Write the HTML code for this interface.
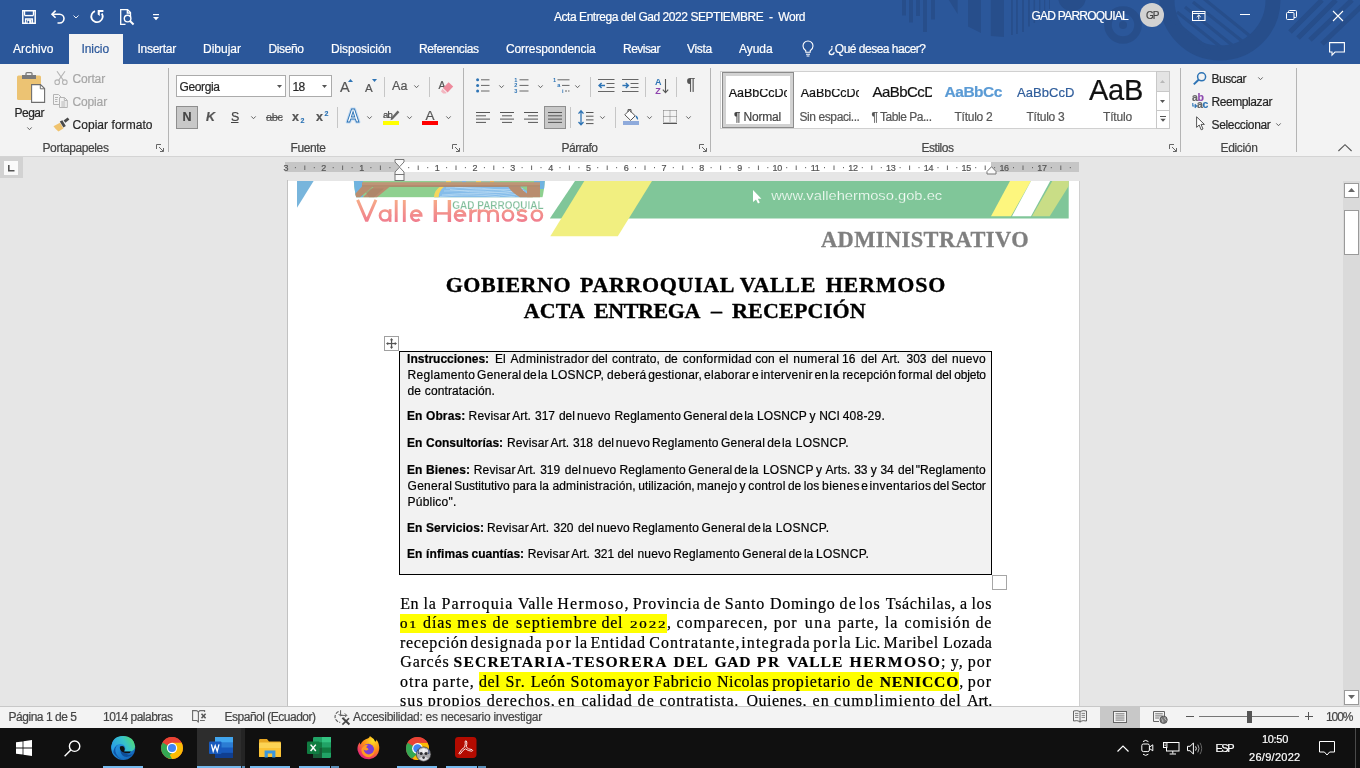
<!DOCTYPE html>
<html><head><meta charset="utf-8"><title>Word</title>
<style>
html,body{margin:0;padding:0;width:1360px;height:768px;overflow:hidden;background:#e6e6e6;}
body{position:relative;font-family:"Liberation Sans",sans-serif;font-size:12px;color:#262626;}
.a{position:absolute;}
.t{position:absolute;white-space:pre;line-height:normal;font-family:"Liberation Sans",sans-serif;-webkit-text-stroke:0.2px currentColor;}
svg{position:absolute;overflow:visible;}
.sf{font-family:"Liberation Serif",serif;}
.vsep{position:absolute;width:1px;background:#c6c6c6;}
.gsep{position:absolute;width:1px;background:#b4b4b4;top:68px;height:84px;}
.w{color:#fff;}
.dis{color:#a6a6a6;}
.hl{background:#ffff00;}
</style></head>
<body>
<div id="root" style="position:absolute;left:0;top:0;width:1360px;height:768px;overflow:hidden;will-change:transform;">
<!-- ===== TITLE BAR + TABS ===== -->
<div class="a" style="left:0;top:0;width:1360px;height:64px;background:#2b579a;"></div>
<!-- decorative background pattern -->
<svg style="left:880px;top:0" width="480" height="64" viewBox="880 0 480 64">
 <g fill="#274e8b">
  <rect x="902" y="0" width="4" height="15.5"/><rect x="909" y="0" width="4" height="22.5"/><rect x="916" y="0" width="4" height="16"/>
  <rect x="923" y="0" width="4" height="32"/><rect x="931" y="0" width="4" height="19.5"/>
  <path d="M948.8 0H957.6V14Z"/>
  <path d="M968 0H981V33L968 26.5Z"/>
  <path d="M990.8 0H1004V37L990.8 36Z"/>
  <rect x="1011" y="0" width="1.8" height="35"/><rect x="1016" y="0" width="1.8" height="34"/><rect x="1022" y="0" width="2" height="32"/>
  <rect x="1028" y="0" width="1.8" height="26.5"/><rect x="1033.5" y="0" width="1.6" height="23"/><rect x="1039" y="0" width="1.4" height="18"/><rect x="1044" y="0" width="1.2" height="13"/><rect x="1049" y="0" width="1" height="9"/>
  <circle cx="1072" cy="-3" r="14"/>
 </g>
 <g fill="none" stroke="#274e8b">
  <circle cx="1123" cy="25" r="15" stroke-width="7.5"/>
  <circle cx="1220" cy="0" r="53" stroke-width="15"/>
 </g>
 <circle cx="1123" cy="25" r="4" fill="#274e8b"/>
 <g stroke="#274e8b" stroke-width="3.2">
  <path d="M1170 18L1210 50M1177 12L1222 48M1185 7L1232 45M1193 2L1242 41M1203 -2L1250 36"/>
  <path d="M1322 0L1290 32M1336 0L1298 38M1352 0L1310 40M1368 0L1322 44" stroke-width="5"/>
 </g>
</svg>
<!-- QAT icons -->
<svg style="left:22px;top:10px" width="14" height="14" viewBox="0 0 14 14" fill="none" stroke="#fff" stroke-width="1.5">
 <path d="M0.8 0.8H13.2V13.2H0.8Z"/><path d="M2.6 5.6H11.4" stroke-width="1.4"/><path d="M2.6 0.8V5.6M11.4 0.8V5.6" stroke-width="1.2"/><path d="M3.6 13V9H10.4V13" stroke-width="1.4"/><rect x="5" y="9.6" width="4.4" height="3.4" fill="#fff" stroke="none"/><rect x="5.6" y="10.8" width="1.6" height="2.4" fill="#2b579a" stroke="none"/>
</svg>
<svg style="left:51px;top:10px" width="15" height="14" viewBox="0 0 15 14" fill="none" stroke="#fff" stroke-width="1.6">
 <path d="M1 4.2H8.6A4.4 4.4 0 0 1 8.6 13H6.5"/><path d="M4.6 0.6L1 4.2L4.6 7.8"/>
</svg>
<svg style="left:72.5px;top:14.5px" width="6" height="4" viewBox="0 0 6 4" fill="none" stroke="#e8eef7" stroke-width="1"><path d="M0.5 0.5L3 3L5.5 0.5"/></svg>
<svg style="left:89.5px;top:10px" width="14" height="14" viewBox="0 0 14 14" fill="none" stroke="#fff" stroke-width="1.8">
 <path d="M5 1.1A5.7 5.7 0 1 0 11.8 3.4"/><path d="M7.7 0H13.4V1.9H9.8V6L7.7 4.4Z" fill="#fff" stroke="none"/>
</svg>
<svg style="left:119.5px;top:9px" width="15" height="16" viewBox="0 0 15 16" fill="none" stroke="#fff" stroke-width="1.3">
 <path d="M10.5 8V3.6L7.6 0.7H0.7V15.3H5.5"/><path d="M7.3 0.7V4H10.5"/>
 <circle cx="7.6" cy="9.6" r="3.3" stroke-width="1.4"/><path d="M10 12L13.6 15.4" stroke-width="2"/>
</svg>
<svg style="left:152.5px;top:14px" width="6" height="7" viewBox="0 0 6 7" fill="#fff"><rect x="0" y="0" width="6" height="1.2"/><path d="M0 3H6L3 6.2Z"/></svg>
<span class="t" style="left:554px;top:10.30px;font-size:12px;letter-spacing:-0.450px;color:#fff;">Acta Entrega del Gad 2022 SEPTIEMBRE  -  Word</span>
<span class="t" style="left:1031.5px;top:9.00px;font-size:12px;letter-spacing:-0.760px;color:#fff;">GAD PARROQUIAL</span>
<div class="a" style="left:1140px;top:3px;width:24px;height:24px;border-radius:12px;background:#d2d2d2;"></div>
<span class="t" style="left:1146px;top:10.00px;font-size:10px;letter-spacing:-0.977px;color:#444;">GP</span>
<!-- window buttons -->
<svg style="left:1192px;top:10.5px" width="14" height="10" viewBox="0 0 14 10" fill="none" stroke="#fff" stroke-width="1">
 <rect x="0.5" y="0.5" width="12.5" height="9"/><path d="M0.5 2.5H13" /><path d="M6.75 8.5V4.2M4.7 6L6.75 4L8.8 6"/>
</svg>
<div class="a" style="left:1240px;top:14px;width:10px;height:1px;background:#fff;"></div>
<svg style="left:1285.5px;top:10px" width="11" height="10" viewBox="0 0 11 10" fill="none" stroke="#fff" stroke-width="1">
 <rect x="0.5" y="2.5" width="7.5" height="7" rx="1"/><path d="M2.5 2.5V1.5Q2.5 0.5 3.5 0.5H9.5Q10.5 0.5 10.5 1.5V6.5Q10.5 7.5 9.5 7.5H8"/>
</svg>
<svg style="left:1332.5px;top:10.5px" width="10" height="10" viewBox="0 0 10 10" fill="none" stroke="#fff" stroke-width="1.1"><path d="M0 0L10 10M10 0L0 10"/></svg>
<!-- tabs -->
<div class="a" style="left:69px;top:34px;width:54px;height:30px;background:#f3f3f3;"></div>
<span class="t" style="left:13px;top:42.00px;font-size:12px;letter-spacing:0.069px;color:#fff;">Archivo</span>
<span class="t" style="left:81.5px;top:42.00px;font-size:12px;letter-spacing:-0.086px;color:#2b579a;">Inicio</span>
<span class="t" style="left:137.5px;top:42.00px;font-size:12px;letter-spacing:-0.273px;color:#fff;">Insertar</span>
<span class="t" style="left:203px;top:42.00px;font-size:12px;letter-spacing:-0.002px;color:#fff;">Dibujar</span>
<span class="t" style="left:268.5px;top:42.00px;font-size:12px;letter-spacing:-0.393px;color:#fff;">Diseño</span>
<span class="t" style="left:331px;top:42.00px;font-size:12px;letter-spacing:-0.124px;color:#fff;">Disposición</span>
<span class="t" style="left:419px;top:42.00px;font-size:12px;letter-spacing:-0.412px;color:#fff;">Referencias</span>
<span class="t" style="left:506px;top:42.00px;font-size:12px;letter-spacing:-0.126px;color:#fff;">Correspondencia</span>
<span class="t" style="left:623px;top:42.00px;font-size:12px;letter-spacing:-0.527px;color:#fff;">Revisar</span>
<span class="t" style="left:687px;top:42.00px;font-size:12px;letter-spacing:-0.294px;color:#fff;">Vista</span>
<span class="t" style="left:739px;top:42.00px;font-size:12px;letter-spacing:-0.062px;color:#fff;">Ayuda</span>
<svg style="left:802px;top:40px" width="12" height="17" viewBox="0 0 12 17" fill="none" stroke="#fff" stroke-width="1.1">
 <path d="M3.8 12.2V10.8C2 9.6 1 8 1 6A5 5 0 0 1 11 6C11 8 10 9.6 8.2 10.8V12.2Z"/><path d="M4 14.2H8M4.6 16H7.4"/>
</svg>
<span class="t" style="left:828px;top:42.00px;font-size:12px;letter-spacing:-0.505px;color:#fff;">¿Qué desea hacer?</span>
<svg style="left:1329px;top:41.5px" width="16" height="14" viewBox="0 0 16 14" fill="none" stroke="#fff" stroke-width="1.1">
 <path d="M0.6 0.6H15.4V10H6L3 13.2V10H0.6Z"/>
</svg>
<!-- ===== RIBBON ===== -->
<div class="a" style="left:0;top:64px;width:1360px;height:92px;background:#f3f3f3;"></div>
<div class="a" style="left:0;top:156px;width:1360px;height:1px;background:#d4d4d4;"></div>
<!-- Clipboard group -->
<svg style="left:17px;top:72px" width="29" height="31" viewBox="0 0 29 31">
 <rect x="0" y="3.5" width="24" height="24.5" rx="1.5" fill="#ecc373"/>
 <rect x="5" y="3" width="14" height="4" fill="#7a7a7a"/><path d="M9 3.2V1.6Q9 0.6 10 0.6H14Q15 0.6 15 1.6V3.2" fill="none" stroke="#7a7a7a" stroke-width="1.3"/>
 <path d="M14.6 12.6H23.5L27.6 16.6V30.4H14.6Z" fill="#fff" stroke="#6e6e6e" stroke-width="1.1"/><path d="M23.3 12.8V16.8H27.4" fill="none" stroke="#6e6e6e" stroke-width="1"/>
</svg>
<span class="t" style="left:14.5px;top:106.00px;font-size:12px;letter-spacing:-0.506px;">Pegar</span>
<svg style="left:27px;top:127px" width="5" height="3.5" viewBox="0 0 5 3.5" fill="none" stroke="#555" stroke-width="0.9"><path d="M0.3 0.4L2.5 2.7L4.7 0.4"/></svg>
<!-- cut -->
<svg style="left:54px;top:71px" width="14" height="14" viewBox="0 0 14 14" fill="none" stroke="#b4b4b4" stroke-width="1.1">
 <path d="M3 0.3L9.6 9.6M11 0.3L4.4 9.6"/><circle cx="3.2" cy="11.2" r="2.3"/><circle cx="10.8" cy="11.2" r="2.3"/>
</svg>
<span class="t" style="left:72.5px;top:72.00px;font-size:12px;letter-spacing:-0.141px;color:#a6a6a6;">Cortar</span>
<!-- copy -->
<svg style="left:53px;top:94px" width="15" height="14" viewBox="0 0 15 14" fill="none" stroke="#b4b4b4" stroke-width="1">
 <path d="M6.5 10.5H0.5V0.5H5.5L8 3"/><path d="M2 3.5H5M2 5.5H4.5M2 7.5H4.5"/>
 <path d="M6.5 3.5H11.5L14.3 6.3V13.5H6.5Z" fill="#f3f3f3"/><path d="M8.3 8H12.3M8.3 10H12.3M8.3 12H12.3M11.3 3.7V6.5H14.2"/>
</svg>
<span class="t" style="left:72.5px;top:95.00px;font-size:12px;letter-spacing:-0.143px;color:#a6a6a6;">Copiar</span>
<!-- format painter -->
<svg style="left:53px;top:116.5px" width="17" height="15" viewBox="0 0 17 15">
 <path d="M0.5 9.2L7 5.8L10.4 11.6L5.4 14.6Q2.8 12.4 0.5 9.2Z" fill="#f0c36e"/>
 <path d="M6.8 4.6L9.4 3.2L12.8 9L10.4 10.4Z" fill="#4a4a4a"/>
 <path d="M10.6 3.4L14.6 0.6L16.4 2.4L12.4 5.8Z" fill="#4a4a4a"/>
</svg>
<span class="t" style="left:72.5px;top:118.00px;font-size:12px;letter-spacing:0.045px;">Copiar formato</span>
<span class="t" style="left:42.5px;top:141.00px;font-size:12px;letter-spacing:-0.393px;color:#444;">Portapapeles</span>
<svg class="lau" style="left:156px;top:144px" width="8" height="8" viewBox="0 0 8 8" fill="none" stroke="#666" stroke-width="1"><path d="M0.5 5V0.5H5"/><path d="M3 3L7.3 7.3M7.5 4V7.5H4"/></svg>
<div class="gsep" style="left:167.5px;"></div>
<!-- Font group -->
<div class="a" style="left:176px;top:75px;width:109.5px;height:21.5px;background:#fff;border:1px solid #ababab;box-sizing:border-box;"></div>
<span class="t" style="left:179.5px;top:80.00px;font-size:12px;letter-spacing:-0.386px;">Georgia</span>
<svg style="left:277px;top:85px" width="5" height="3" viewBox="0 0 5 3" fill="#555"><path d="M0 0H5L2.5 3Z"/></svg>
<div class="a" style="left:289px;top:75px;width:43px;height:21.5px;background:#fff;border:1px solid #ababab;box-sizing:border-box;"></div>
<span class="t" style="left:292.5px;top:80.00px;font-size:12px;letter-spacing:-0.680px;">18</span>
<svg style="left:322px;top:85px" width="5" height="3" viewBox="0 0 5 3" fill="#555"><path d="M0 0H5L2.5 3Z"/></svg>
<!-- grow / shrink -->
<span class="t" style="left:340px;top:79.00px;font-size:14.5px;letter-spacing:0.328px;color:#555;">A</span>
<svg style="left:348px;top:79px" width="5" height="3" viewBox="0 0 5 3" fill="#2e74b5"><path d="M0 3H5L2.5 0Z"/></svg>
<span class="t" style="left:365px;top:82.00px;font-size:11.5px;letter-spacing:0.328px;color:#555;">A</span>
<svg style="left:372px;top:79px" width="5" height="3" viewBox="0 0 5 3" fill="#2e74b5"><path d="M0 0H5L2.5 3Z"/></svg>
<div class="vsep" style="left:384px;top:77px;height:20px;"></div>
<span class="t" style="left:392px;top:79.00px;font-size:12.5px;letter-spacing:0.102px;color:#555;">Aa</span>
<svg class="dd" style="left:413.5px;top:84.5px" width="5" height="3.5" viewBox="0 0 5 3.5" fill="none" stroke="#555" stroke-width="0.9"><path d="M0.3 0.4L2.5 2.7L4.7 0.4"/></svg>
<div class="vsep" style="left:429px;top:77px;height:20px;"></div>
<!-- clear formatting -->
<span class="t" style="left:438.5px;top:79.00px;font-size:10.5px;letter-spacing:-0.016px;color:#555;">A</span>
<svg style="left:440px;top:81px" width="14" height="13" viewBox="0 0 14 13">
 <path d="M8.6 1.2L13.2 5.6L7.6 11.4L3 7Z" fill="#ee8a9c"/><path d="M2.4 7.8L6.8 12L5.6 12.6H3.2L1 10.4Z" fill="#f3b6c0"/>
</svg>
<!-- row 2 -->
<div class="a" style="left:176px;top:106px;width:22px;height:23px;background:#c8c8c8;border:1px solid #8e8e8e;box-sizing:border-box;"></div>
<span class="t" style="left:182.5px;top:110.00px;font-size:12.5px;letter-spacing:-0.031px;font-weight:bold;color:#444;">N</span>
<span class="t" style="left:206px;top:110.00px;font-size:12.5px;letter-spacing:-1.031px;font-weight:bold;font-style:italic;color:#555;">K</span>
<span class="t" style="left:231px;top:110.00px;font-size:12.5px;letter-spacing:-0.844px;color:#444;text-decoration:underline;text-underline-offset:1px;">S</span>
<svg class="dd" style="left:250.5px;top:115.5px" width="5" height="3.5" viewBox="0 0 5 3.5" fill="none" stroke="#555" stroke-width="0.9"><path d="M0.3 0.4L2.5 2.7L4.7 0.4"/></svg>
<span class="t" style="left:266px;top:111.00px;font-size:11px;letter-spacing:-0.417px;color:#555;text-decoration:line-through;">abc</span>
<span class="t" style="left:292px;top:110.00px;font-size:12.5px;letter-spacing:1.047px;font-weight:bold;color:#555;">x</span>
<span class="t" style="left:300.5px;top:117.00px;font-size:7px;letter-spacing:0.094px;color:#2e74b5;font-weight:bold;">2</span>
<span class="t" style="left:316px;top:110.00px;font-size:12.5px;letter-spacing:1.047px;font-weight:bold;color:#555;">x</span>
<span class="t" style="left:324.5px;top:110.00px;font-size:7px;letter-spacing:0.094px;color:#2e74b5;font-weight:bold;">2</span>
<div class="vsep" style="left:337px;top:107px;height:21px;"></div>
<!-- text effects A -->
<svg style="left:345px;top:108px" width="16" height="16" viewBox="0 0 16 16">
 <text x="8" y="14.4" text-anchor="middle" font-family="Liberation Sans" font-weight="bold" font-size="17.5" fill="none" stroke="#c3dbf3" stroke-width="3" stroke-linejoin="round">A</text>
 <text x="8" y="14.4" text-anchor="middle" font-family="Liberation Sans" font-weight="bold" font-size="17.5" fill="#fff" stroke="#2e74b5" stroke-width="0.9">A</text>
</svg>
<svg class="dd" style="left:366.5px;top:115.5px" width="5" height="3.5" viewBox="0 0 5 3.5" fill="none" stroke="#555" stroke-width="0.9"><path d="M0.3 0.4L2.5 2.7L4.7 0.4"/></svg>
<!-- highlight -->
<span class="t" style="left:383px;top:109.00px;font-size:9.5px;letter-spacing:-0.789px;color:#444;">ab</span>
<svg style="left:389px;top:109.5px" width="11" height="11" viewBox="0 0 11 11"><path d="M8.6 0.4L10.4 2.2L3.6 9.4L1.6 10.2L2 8Z" fill="#666"/></svg>
<div class="a" style="left:383px;top:121px;width:16px;height:3.7px;background:#ffff00;"></div>
<svg class="dd" style="left:406.5px;top:115.5px" width="5" height="3.5" viewBox="0 0 5 3.5" fill="none" stroke="#555" stroke-width="0.9"><path d="M0.3 0.4L2.5 2.7L4.7 0.4"/></svg>
<!-- font colour -->
<span class="t" style="left:425.5px;top:108.30px;font-size:13.5px;letter-spacing:-0.016px;color:#555;">A</span>
<div class="a" style="left:422px;top:121px;width:16px;height:3.7px;background:#ff0000;"></div>
<svg class="dd" style="left:445.5px;top:115.5px" width="5" height="3.5" viewBox="0 0 5 3.5" fill="none" stroke="#555" stroke-width="0.9"><path d="M0.3 0.4L2.5 2.7L4.7 0.4"/></svg>
<span class="t" style="left:290.5px;top:141.00px;font-size:12px;letter-spacing:-0.393px;color:#444;">Fuente</span>
<svg class="lau" style="left:452px;top:144px" width="8" height="8" viewBox="0 0 8 8" fill="none" stroke="#666" stroke-width="1"><path d="M0.5 5V0.5H5"/><path d="M3 3L7.3 7.3M7.5 4V7.5H4"/></svg>
<div class="gsep" style="left:463px;"></div>
<!-- Paragraph group row 1 -->
<svg style="left:476px;top:78px" width="14" height="15" viewBox="0 0 14 15">
 <g fill="#2e74b5"><circle cx="1.6" cy="1.8" r="1.5"/><circle cx="1.6" cy="7.4" r="1.5"/><circle cx="1.6" cy="13" r="1.5"/></g>
 <g stroke="#666" stroke-width="1"><path d="M5 1.8H13.5M5 7.4H13.5M5 13H13.5"/></g>
</svg>
<svg class="dd" style="left:498.5px;top:84.5px" width="5" height="3.5" viewBox="0 0 5 3.5" fill="none" stroke="#555" stroke-width="0.9"><path d="M0.3 0.4L2.5 2.7L4.7 0.4"/></svg>
<svg style="left:514px;top:77px" width="15" height="16" viewBox="0 0 15 16">
 <g font-family="Liberation Sans" font-size="5.6" font-weight="bold" fill="#2e74b5"><text x="0.2" y="4.8">1</text><text x="0.2" y="10.4">2</text><text x="0.2" y="16">3</text></g>
 <g stroke="#666" stroke-width="1"><path d="M5.5 2.8H14.5M5.5 8.4H14.5M5.5 14H14.5"/></g>
</svg>
<svg class="dd" style="left:537.5px;top:84.5px" width="5" height="3.5" viewBox="0 0 5 3.5" fill="none" stroke="#555" stroke-width="0.9"><path d="M0.3 0.4L2.5 2.7L4.7 0.4"/></svg>
<svg style="left:552.5px;top:77px" width="17" height="16" viewBox="0 0 17 16">
 <g font-family="Liberation Sans" font-size="5.6" font-weight="bold" fill="#2e74b5"><text x="0" y="4.8">1</text><text x="4.3" y="10.4">a</text><text x="9" y="16">i</text></g>
 <g stroke="#666" stroke-width="1"><path d="M4.5 2.8H16.5M9 8.4H16.5"/><path d="M12 14H16.5" stroke-dasharray="2 1"/></g>
</svg>
<svg class="dd" style="left:574.5px;top:84.5px" width="5" height="3.5" viewBox="0 0 5 3.5" fill="none" stroke="#555" stroke-width="0.9"><path d="M0.3 0.4L2.5 2.7L4.7 0.4"/></svg>
<div class="vsep" style="left:590px;top:77px;height:20px;"></div>
<svg style="left:597.5px;top:79px" width="17" height="14" viewBox="0 0 17 14">
 <g stroke="#666" stroke-width="1"><path d="M0 0.5H16.5M8.5 4.5H16.5M8.5 8.5H16.5M0 12.5H16.5"/></g>
 <path d="M7 6.5H1.2M3.6 3.9L1 6.5L3.6 9.1" fill="none" stroke="#2e74b5" stroke-width="1.4"/>
</svg>
<svg style="left:622px;top:79px" width="17" height="14" viewBox="0 0 17 14">
 <g stroke="#666" stroke-width="1"><path d="M0 0.5H16.5M8.5 4.5H16.5M8.5 8.5H16.5M0 12.5H16.5"/></g>
 <path d="M0.4 6.5H6.2M3.8 3.9L6.4 6.5L3.8 9.1" fill="none" stroke="#2e74b5" stroke-width="1.4"/>
</svg>
<div class="vsep" style="left:645px;top:77px;height:20px;"></div>
<svg style="left:655px;top:77.5px" width="14" height="16" viewBox="0 0 14 16">
 <text x="0" y="7.2" font-family="Liberation Sans" font-size="9" font-weight="bold" fill="#2e74b5">A</text>
 <text x="0.3" y="15.6" font-family="Liberation Sans" font-size="9" font-weight="bold" fill="#8e44ad">Z</text>
 <path d="M10.5 1V14.5M7.8 11.6L10.5 14.6L13.2 11.6" fill="none" stroke="#555" stroke-width="1.1"/>
</svg>
<div class="vsep" style="left:676px;top:77px;height:20px;"></div>
<span class="t" style="left:686.5px;top:75.00px;font-size:16.5px;letter-spacing:1.625px;color:#555;">¶</span>
<!-- Paragraph row 2 -->
<svg style="left:476px;top:111.5px" width="14" height="11" viewBox="0 0 14 11" stroke="#555" stroke-width="1"><path d="M0 0.5H14M0 3.8H10M0 7.1H14M0 10.4H10"/></svg>
<svg style="left:500px;top:111.5px" width="14" height="11" viewBox="0 0 14 11" stroke="#555" stroke-width="1"><path d="M0 0.5H14M2 3.8H12M0 7.1H14M2 10.4H12"/></svg>
<svg style="left:524px;top:111.5px" width="14" height="11" viewBox="0 0 14 11" stroke="#555" stroke-width="1"><path d="M0 0.5H14M4 3.8H14M0 7.1H14M4 10.4H14"/></svg>
<div class="a" style="left:544px;top:106px;width:22px;height:23px;background:#c8c8c8;border:1px solid #8e8e8e;box-sizing:border-box;"></div>
<svg style="left:548px;top:111.5px" width="14" height="11" viewBox="0 0 14 11" stroke="#555" stroke-width="1"><path d="M0 0.5H14M0 3.8H14M0 7.1H14M0 10.4H14"/></svg>
<div class="vsep" style="left:570px;top:107px;height:21px;"></div>
<svg style="left:578px;top:109.5px" width="16" height="16" viewBox="0 0 16 16">
 <path d="M3 1V14.5M0.5 3.6L3 0.8L5.5 3.6M0.5 12L3 14.8L5.5 12" fill="none" stroke="#2e74b5" stroke-width="1.3"/>
 <g stroke="#555" stroke-width="1"><path d="M8 2.5H15.5M8 6.2H15.5M8 9.9H15.5M8 13.6H15.5"/></g>
</svg>
<svg class="dd" style="left:599.5px;top:115.5px" width="5" height="3.5" viewBox="0 0 5 3.5" fill="none" stroke="#555" stroke-width="0.9"><path d="M0.3 0.4L2.5 2.7L4.7 0.4"/></svg>
<div class="vsep" style="left:615px;top:107px;height:21px;"></div>
<svg style="left:623px;top:109px" width="17" height="12" viewBox="0 0 17 12">
 <path d="M6.4 1.2L12.2 6.8L7.6 11.4L1.8 5.8Z" fill="#fff" stroke="#555" stroke-width="1"/><path d="M5 3V0.6H8V3.4" fill="none" stroke="#555" stroke-width="1"/>
 <path d="M12.4 6.2Q15.6 7.4 15 11Q12.8 9.6 12.4 6.2Z" fill="#2e74b5"/>
</svg>
<div class="a" style="left:623px;top:121px;width:16px;height:3.7px;background:#8eaadb;"></div>
<svg class="dd" style="left:646.5px;top:115.5px" width="5" height="3.5" viewBox="0 0 5 3.5" fill="none" stroke="#555" stroke-width="0.9"><path d="M0.3 0.4L2.5 2.7L4.7 0.4"/></svg>
<svg style="left:663px;top:110px" width="14" height="14" viewBox="0 0 14 14" fill="none" stroke="#777" stroke-width="1">
 <path d="M0.5 0.5H13.5M0.5 0.5V12M13.5 0.5V12M7 0.5V12M0.5 6.5H13.5" stroke-dasharray="1 1"/><path d="M0 13.3H14" stroke="#444" stroke-width="1.2"/>
</svg>
<svg class="dd" style="left:685.5px;top:115.5px" width="5" height="3.5" viewBox="0 0 5 3.5" fill="none" stroke="#555" stroke-width="0.9"><path d="M0.3 0.4L2.5 2.7L4.7 0.4"/></svg>
<span class="t" style="left:561.5px;top:141.00px;font-size:12px;letter-spacing:-0.480px;color:#444;">Párrafo</span>
<svg class="lau" style="left:699px;top:144px" width="8" height="8" viewBox="0 0 8 8" fill="none" stroke="#666" stroke-width="1"><path d="M0.5 5V0.5H5"/><path d="M3 3L7.3 7.3M7.5 4V7.5H4"/></svg>
<div class="gsep" style="left:710px;"></div>
<!-- Styles gallery -->
<div class="a" style="left:720px;top:70.5px;width:449.5px;height:58.5px;background:#fff;border:1px solid #d0d0d0;box-sizing:border-box;"></div>
<div class="a" style="left:722px;top:72px;width:72px;height:56px;border:1px solid #8c8c8c;box-shadow:inset 0 0 0 3px #d2d2d2;box-sizing:border-box;background:#fff;"></div>
<div class="a" style="left:727px;top:88.6px;width:60.4px;height:14px;overflow:hidden;"><span class="t" style="left:1.8px;top:-2.60px;font-size:12.5px;letter-spacing:-0.018px;color:#111;">AaBbCcDc</span></div>
<span class="t" style="left:734px;top:109.50px;font-size:12px;letter-spacing:-0.182px;color:#444;">¶ Normal</span>
<div class="a" style="left:799px;top:88.6px;width:60.4px;height:14px;overflow:hidden;"><span class="t" style="left:1.8px;top:-2.60px;font-size:12.5px;letter-spacing:-0.018px;color:#111;">AaBbCcDc</span></div>
<span class="t" style="left:799.5px;top:109.50px;font-size:12px;letter-spacing:-0.413px;color:#555;">Sin espaci...</span>
<div class="a" style="left:871px;top:78px;width:61px;height:22px;overflow:hidden;"><span class="t" style="left:1.5px;top:5.00px;font-size:15px;letter-spacing:-0.551px;color:#111;">AaBbCcD</span></div>
<span class="t" style="left:871.5px;top:109.50px;font-size:12px;letter-spacing:-0.482px;color:#555;">¶ Table Pa...</span>
<span class="t" style="left:944.5px;top:83.00px;font-size:15.5px;letter-spacing:-0.466px;color:#5b9bd5;font-weight:bold;">AaBbCc</span>
<span class="t" style="left:954.5px;top:109.50px;font-size:12px;letter-spacing:-0.254px;color:#555;">Título 2</span>
<span class="t" style="left:1017px;top:85.00px;font-size:13px;letter-spacing:0.060px;color:#2f5d9b;">AaBbCcD</span>
<span class="t" style="left:1026.5px;top:109.50px;font-size:12px;letter-spacing:-0.254px;color:#555;">Título 3</span>
<div class="a" style="left:1086px;top:78px;width:62px;height:24px;overflow:hidden;"><span class="t" style="left:3px;top:-4.50px;font-size:29px;letter-spacing:-0.276px;color:#111;">AaB</span></div>
<span class="t" style="left:1103px;top:109.50px;font-size:12px;letter-spacing:-0.169px;color:#555;">Título</span>
<!-- gallery scroll -->
<div class="a" style="left:1155.5px;top:70.5px;width:14px;height:58.5px;border:1px solid #c8c8c8;box-sizing:border-box;background:#fff;"></div>
<div class="a" style="left:1156.5px;top:71.5px;width:12px;height:19.5px;background:#e4e4e4;"></div>
<div class="a" style="left:1156px;top:91px;width:13px;height:1px;background:#c8c8c8;"></div>
<div class="a" style="left:1156px;top:110px;width:13px;height:1px;background:#c8c8c8;"></div>
<svg style="left:1160px;top:79.5px" width="5" height="3" viewBox="0 0 5 3" fill="#b8b8b8"><path d="M0 3H5L2.5 0Z"/></svg>
<svg style="left:1160px;top:99.5px" width="5" height="3" viewBox="0 0 5 3" fill="#555"><path d="M0 0H5L2.5 3Z"/></svg>
<svg style="left:1159.5px;top:116px" width="6" height="6" viewBox="0 0 6 6" fill="#555"><rect x="0" y="0" width="6" height="1"/><path d="M0.3 2.8H5.7L3 5.8Z"/></svg>
<span class="t" style="left:921.5px;top:141.00px;font-size:12px;letter-spacing:-0.478px;color:#444;">Estilos</span>
<svg class="lau" style="left:1169px;top:144px" width="8" height="8" viewBox="0 0 8 8" fill="none" stroke="#666" stroke-width="1"><path d="M0.5 5V0.5H5"/><path d="M3 3L7.3 7.3M7.5 4V7.5H4"/></svg>
<div class="gsep" style="left:1180px;"></div>
<!-- Editing group -->
<svg style="left:1192.5px;top:71.5px" width="14" height="13" viewBox="0 0 14 13" fill="none" stroke="#2e74b5"><circle cx="8.6" cy="4.8" r="4" stroke-width="1.5"/><path d="M5.6 7.8L0.8 12.4" stroke-width="2"/></svg>
<span class="t" style="left:1211.5px;top:72.00px;font-size:12px;letter-spacing:-0.477px;">Buscar</span>
<svg class="dd" style="left:1258px;top:76.5px" width="5" height="3.5" viewBox="0 0 5 3.5" fill="none" stroke="#555" stroke-width="0.9"><path d="M0.3 0.4L2.5 2.7L4.7 0.4"/></svg>
<span class="t" style="left:1192px;top:90.60px;font-size:10.5px;letter-spacing:-0.233px;color:#666;font-weight:bold;">a<span style="color:#8e4bb0">b</span></span>
<span class="t" style="left:1197px;top:97.70px;font-size:10.5px;letter-spacing:-0.344px;color:#666;font-weight:bold;">a<span style="color:#2e74b5">c</span></span>
<svg style="left:1192px;top:102.5px" width="5" height="5" viewBox="0 0 5 5" fill="none" stroke="#2e74b5" stroke-width="1.1"><path d="M0.8 0V3H4.4M2.8 1.2L4.6 3L2.8 4.8"/></svg>
<span class="t" style="left:1211.5px;top:95.00px;font-size:12px;letter-spacing:-0.420px;">Reemplazar</span>
<svg style="left:1196px;top:116px" width="9" height="15" viewBox="0 0 9 15" fill="#fff" stroke="#555" stroke-width="1" stroke-linejoin="round"><path d="M0.6 0.8V11.4L3.2 9L5.2 13.8L7 13L5 8.4H8.4Z"/></svg>
<span class="t" style="left:1211.5px;top:118.00px;font-size:12px;letter-spacing:-0.337px;">Seleccionar</span>
<svg class="dd" style="left:1275.5px;top:122.5px" width="5" height="3.5" viewBox="0 0 5 3.5" fill="none" stroke="#555" stroke-width="0.9"><path d="M0.3 0.4L2.5 2.7L4.7 0.4"/></svg>
<span class="t" style="left:1220.5px;top:141.00px;font-size:12px;letter-spacing:-0.337px;color:#444;">Edición</span>
<div class="gsep" style="left:1296px;"></div>
<svg style="left:1337.5px;top:144px" width="14" height="7.5" viewBox="0 0 14 7.5" fill="none" stroke="#555" stroke-width="1.1"><path d="M0.4 7L7 0.7L13.6 7"/></svg>
<!-- ===== RULER ===== -->
<div class="a" style="left:0;top:157px;width:23px;height:21px;background:#d2d2d2;"></div>
<div class="a" style="left:4px;top:161px;width:14px;height:14px;background:#fafafa;"></div>
<svg style="left:8px;top:165px" width="7" height="7" viewBox="0 0 7 7" fill="none" stroke="#555" stroke-width="1.6"><path d="M0.8 0V5.8H6.5"/></svg>
<div class="a" style="left:285px;top:162px;width:114px;height:10px;background:#c6c6c6;"></div>
<div class="a" style="left:399px;top:162px;width:592px;height:10px;background:#fff;"></div>
<div class="a" style="left:991px;top:162px;width:88px;height:10px;background:#c6c6c6;"></div>
<span class="t" style="left:275.9px;top:162.6px;width:20px;text-align:center;font-size:9px;line-height:11px;color:#555;letter-spacing:-0.3px;">3</span>
<span class="t" style="left:313.7px;top:162.6px;width:20px;text-align:center;font-size:9px;line-height:11px;color:#555;letter-spacing:-0.3px;">2</span>
<span class="t" style="left:351.5px;top:162.6px;width:20px;text-align:center;font-size:9px;line-height:11px;color:#555;letter-spacing:-0.3px;">1</span>
<span class="t" style="left:427.1px;top:162.6px;width:20px;text-align:center;font-size:9px;line-height:11px;color:#555;letter-spacing:-0.3px;">1</span>
<span class="t" style="left:464.9px;top:162.6px;width:20px;text-align:center;font-size:9px;line-height:11px;color:#555;letter-spacing:-0.3px;">2</span>
<span class="t" style="left:502.7px;top:162.6px;width:20px;text-align:center;font-size:9px;line-height:11px;color:#555;letter-spacing:-0.3px;">3</span>
<span class="t" style="left:540.5px;top:162.6px;width:20px;text-align:center;font-size:9px;line-height:11px;color:#555;letter-spacing:-0.3px;">4</span>
<span class="t" style="left:578.3px;top:162.6px;width:20px;text-align:center;font-size:9px;line-height:11px;color:#555;letter-spacing:-0.3px;">5</span>
<span class="t" style="left:616.1px;top:162.6px;width:20px;text-align:center;font-size:9px;line-height:11px;color:#555;letter-spacing:-0.3px;">6</span>
<span class="t" style="left:653.9px;top:162.6px;width:20px;text-align:center;font-size:9px;line-height:11px;color:#555;letter-spacing:-0.3px;">7</span>
<span class="t" style="left:691.7px;top:162.6px;width:20px;text-align:center;font-size:9px;line-height:11px;color:#555;letter-spacing:-0.3px;">8</span>
<span class="t" style="left:729.5px;top:162.6px;width:20px;text-align:center;font-size:9px;line-height:11px;color:#555;letter-spacing:-0.3px;">9</span>
<span class="t" style="left:767.3px;top:162.6px;width:20px;text-align:center;font-size:9px;line-height:11px;color:#555;letter-spacing:-0.3px;">10</span>
<span class="t" style="left:805.1px;top:162.6px;width:20px;text-align:center;font-size:9px;line-height:11px;color:#555;letter-spacing:-0.3px;">11</span>
<span class="t" style="left:842.9px;top:162.6px;width:20px;text-align:center;font-size:9px;line-height:11px;color:#555;letter-spacing:-0.3px;">12</span>
<span class="t" style="left:880.7px;top:162.6px;width:20px;text-align:center;font-size:9px;line-height:11px;color:#555;letter-spacing:-0.3px;">13</span>
<span class="t" style="left:918.5px;top:162.6px;width:20px;text-align:center;font-size:9px;line-height:11px;color:#555;letter-spacing:-0.3px;">14</span>
<span class="t" style="left:956.3px;top:162.6px;width:20px;text-align:center;font-size:9px;line-height:11px;color:#555;letter-spacing:-0.3px;">15</span>
<span class="t" style="left:994.1px;top:162.6px;width:20px;text-align:center;font-size:9px;line-height:11px;color:#555;letter-spacing:-0.3px;">16</span>
<span class="t" style="left:1031.9px;top:162.6px;width:20px;text-align:center;font-size:9px;line-height:11px;color:#555;letter-spacing:-0.3px;">17</span>
<svg style="left:0;top:0" width="1360" height="200" viewBox="0 0 1360 200" fill="#666"><rect x="294.9" y="167" width="1" height="1.2"/><rect x="304.3" y="165.5" width="1" height="4.5"/><rect x="313.8" y="167" width="1" height="1.2"/><rect x="332.7" y="167" width="1" height="1.2"/><rect x="342.1" y="165.5" width="1" height="4.5"/><rect x="351.6" y="167" width="1" height="1.2"/><rect x="370.4" y="167" width="1" height="1.2"/><rect x="379.9" y="165.5" width="1" height="4.5"/><rect x="389.4" y="167" width="1" height="1.2"/><rect x="408.2" y="167" width="1" height="1.2"/><rect x="417.7" y="165.5" width="1" height="4.5"/><rect x="427.2" y="167" width="1" height="1.2"/><rect x="446.1" y="167" width="1" height="1.2"/><rect x="455.5" y="165.5" width="1" height="4.5"/><rect x="464.9" y="167" width="1" height="1.2"/><rect x="483.9" y="167" width="1" height="1.2"/><rect x="493.3" y="165.5" width="1" height="4.5"/><rect x="502.8" y="167" width="1" height="1.2"/><rect x="521.6" y="167" width="1" height="1.2"/><rect x="531.1" y="165.5" width="1" height="4.5"/><rect x="540.5" y="167" width="1" height="1.2"/><rect x="559.5" y="167" width="1" height="1.2"/><rect x="568.9" y="165.5" width="1" height="4.5"/><rect x="578.4" y="167" width="1" height="1.2"/><rect x="597.2" y="167" width="1" height="1.2"/><rect x="606.7" y="165.5" width="1" height="4.5"/><rect x="616.1" y="167" width="1" height="1.2"/><rect x="635.0" y="167" width="1" height="1.2"/><rect x="644.5" y="165.5" width="1" height="4.5"/><rect x="654.0" y="167" width="1" height="1.2"/><rect x="672.8" y="167" width="1" height="1.2"/><rect x="682.3" y="165.5" width="1" height="4.5"/><rect x="691.8" y="167" width="1" height="1.2"/><rect x="710.6" y="167" width="1" height="1.2"/><rect x="720.1" y="165.5" width="1" height="4.5"/><rect x="729.5" y="167" width="1" height="1.2"/><rect x="748.5" y="167" width="1" height="1.2"/><rect x="757.9" y="165.5" width="1" height="4.5"/><rect x="767.3" y="167" width="1" height="1.2"/><rect x="786.2" y="167" width="1" height="1.2"/><rect x="795.7" y="165.5" width="1" height="4.5"/><rect x="805.1" y="167" width="1" height="1.2"/><rect x="824.0" y="167" width="1" height="1.2"/><rect x="833.5" y="165.5" width="1" height="4.5"/><rect x="843.0" y="167" width="1" height="1.2"/><rect x="861.8" y="167" width="1" height="1.2"/><rect x="871.3" y="165.5" width="1" height="4.5"/><rect x="880.8" y="167" width="1" height="1.2"/><rect x="899.6" y="167" width="1" height="1.2"/><rect x="909.1" y="165.5" width="1" height="4.5"/><rect x="918.5" y="167" width="1" height="1.2"/><rect x="937.5" y="167" width="1" height="1.2"/><rect x="946.9" y="165.5" width="1" height="4.5"/><rect x="956.3" y="167" width="1" height="1.2"/><rect x="975.2" y="167" width="1" height="1.2"/><rect x="984.7" y="165.5" width="1" height="4.5"/><rect x="994.1" y="167" width="1" height="1.2"/><rect x="1013.0" y="167" width="1" height="1.2"/><rect x="1022.5" y="165.5" width="1" height="4.5"/><rect x="1032.0" y="167" width="1" height="1.2"/><rect x="1050.8" y="167" width="1" height="1.2"/><rect x="1060.3" y="165.5" width="1" height="4.5"/><rect x="1069.8" y="167" width="1" height="1.2"/></svg>
<svg style="left:394px;top:158.5px" width="11" height="23" viewBox="0 0 11 23" fill="#fafafa" stroke="#777" stroke-width="1"><path d="M1 0.5H10V3L5.5 7.8L1 3Z"/><path d="M5.5 8.2L10 13V15.5H1V13Z"/><rect x="1" y="15.5" width="9" height="6"/></svg>
<svg style="left:985.5px;top:165.5px" width="11" height="9" viewBox="0 0 11 9" fill="#fafafa" stroke="#777" stroke-width="1"><path d="M5.5 0.7L10 5.5V8H1V5.5Z"/></svg>
<!-- ===== PAGE ===== -->
<div class="a" style="left:287px;top:180px;width:1px;height:526px;background:#c2c2c2;"></div>
<div class="a" style="left:288px;top:181px;width:791px;height:525px;background:#fff;"></div>
<div class="a" style="left:1079px;top:181px;width:1px;height:525px;background:#d0d0d0;"></div>
<!-- header graphic -->
<svg style="left:288px;top:181px" width="791" height="60" viewBox="288 181 791 60">
 <defs>
  <clipPath id="lg"><circle cx="449.3" cy="176" r="95.6"/></clipPath>
  <linearGradient id="vh" x1="0" y1="0" x2="0" y2="1"><stop offset="0" stop-color="#f6a683"/><stop offset="1" stop-color="#f07f8e"/></linearGradient>
 </defs>
 <path d="M297 181H313.6L297 207.8Z" fill="#78b5dc"/>
 <!-- logo bottom slice -->
 <g clip-path="url(#lg)">
  <rect x="350" y="181" width="200" height="16.2" fill="#8ed08f"/>
  <rect x="350" y="181" width="13" height="16.2" fill="#6fb3e0"/>
  <rect x="534" y="181" width="14" height="8" fill="#6fb3e0"/>
  <path d="M441 186H527V197.2H434.5Q435 190 441 186Z" fill="#86bdea"/>
  <path d="M441 186Q434.2 190 434 197.2H438.6Q438.6 191 444.5 186.5Z" fill="#f6d65c"/>
  <g stroke="#c4e0f5" stroke-width="0.6" fill="none"><path d="M446 188Q480 186 520 193M444 191Q485 189 525 196M442 195Q480 191 515 197M455 187Q495 192 526 188M440 196.5Q470 193 500 197M450 189.5Q490 195 524 190.5"/></g>
  <rect x="440" y="181" width="60" height="1.6" fill="#9ec3a8"/><rect x="446" y="181" width="5" height="1.4" fill="#f0d060"/><rect x="462" y="181" width="4" height="1.4" fill="#7fb6e6"/><rect x="476" y="181" width="5" height="1.4" fill="#f0d060"/><rect x="490" y="181" width="4" height="1.4" fill="#e8b85a"/>
  <path d="M362 182.2H540V186.6H362Z" fill="#be9577"/>
  <path d="M362 185.6H540V186.8H362Z" fill="#a98266"/>
  <path d="M362 186.6H373L360 197.2H352Z" fill="#b98d6f"/><path d="M374 186.6H390L377 197.2H363Z" fill="#b98d6f"/>
  <path d="M371 188.5L366 192.5L369 197.2H374L384 188.5Z" fill="#a98266" opacity="0.6"/>
  <path d="M508 186.6H520Q524 193 533 197.2H520Q512 193 508 186.6Z" fill="#b98d6f"/>
  <path d="M527 186.6H540V197.2H527Z" fill="#b98d6f"/>
  <path d="M520 186.6H527V191Z" fill="#8ed08f"/>
 </g>
 <!-- green band + yellow -->
 <path d="M575 181H1068.7V218.6H549.8Z" fill="#80c699"/>
 <path d="M584.3 181H652L617.8 236.3H550.3Z" fill="#f1ef80"/>
 <path d="M1010 181H1031L1011 216.2H991Z" fill="#fdf67e"/>
 <path d="M1031 181H1050.2L1031 216.2H1012Z" fill="#fff"/>
 <path d="M1052.3 181H1068.7V186L1049.7 216.2H1032Z" fill="#c9dd86"/>
 <path d="M753 190V202L756 199.4L758 203.4L759.8 202.6L757.8 198.8H761.4Z" fill="#fff"/>
 <text x="771.2" y="199.6" font-family="Liberation Sans" font-size="13.6" fill="#f3fbf5" textLength="171" lengthAdjust="spacingAndGlyphs" stroke="#80c699" stroke-width="0.18">www.vallehermoso.gob.ec</text>
 <linearGradient id="vs" gradientUnits="userSpaceOnUse" x1="0" y1="199.9" x2="0" y2="221.9"><stop offset="0" stop-color="#f6ab88"/><stop offset="1" stop-color="#f07d8e"/></linearGradient>
 <g fill="none" stroke="url(#vs)" stroke-width="2.7">
  <path d="M357.6 199.9L366.7 221.2L375.9 199.9" stroke-width="3" stroke-linejoin="bevel"/>
  <circle cx="385" cy="215.5" r="5"/><path d="M390.1 209.1V221.9"/>
  <path d="M396.2 199.9V221.9M404.3 199.9V221.9" stroke-width="2.9"/>
  <path d="M411.2 215.4H421.2A5 5 0 1 0 419.6 219.3"/>
  <path d="M435.3 199.9V221.9M449.4 199.9V221.9" stroke-width="3.4"/><path d="M435.3 213.4H449.4" stroke-width="2.5"/>
  <path d="M455 215.4H465A5 5 0 1 0 463.4 219.3"/>
  <path d="M470.6 209.1V221.9M470.6 215.6Q470.6 210.5 476.9 210.5"/>
  <path d="M479 209.1V221.9M479 215.2Q479 210.5 483.8 210.5Q488.5 210.5 488.5 215.2V221.9M488.5 215.2Q488.5 210.5 493.1 210.5Q497.7 210.5 497.7 215.2V221.9"/>
  <circle cx="508" cy="215.5" r="5"/>
  <path d="M526.4 212.2Q525 210.4 522 210.4Q518.2 210.4 518.2 213Q518.2 215.1 522 215.5Q526 215.9 526 218.2Q526 220.6 522 220.6Q518.8 220.6 517.2 218.8"/>
  <circle cx="536.9" cy="215.5" r="5"/>
 </g>
 <text x="452.3" y="208.7" font-family="Liberation Sans" font-size="10.2" font-weight="bold" fill="#7fbd99" textLength="91.2" lengthAdjust="spacingAndGlyphs" stroke="#fff" stroke-width="0.25">GAD PARROQUIAL</text>
</svg>
<span class="t" style="left:821px;top:226.80px;font-size:22.4px;letter-spacing:0.434px;font-family:'Liberation Serif',serif;font-weight:bold;color:#7f7f7f;-webkit-text-stroke:0.3px #7f7f7f;">ADMINISTRATIVO</span>
<span class="t" style="left:445.7px;top:271.80px;font-size:22px;letter-spacing:0.559px;font-family:'Liberation Serif',serif;font-weight:bold;color:#000;-webkit-text-stroke:0.35px #000;">GOBIERNO</span>
<span class="t" style="left:580.1px;top:271.80px;font-size:22px;letter-spacing:0.638px;font-family:'Liberation Serif',serif;font-weight:bold;color:#000;-webkit-text-stroke:0.35px #000;">PARROQUIAL</span>
<span class="t" style="left:739.7px;top:271.80px;font-size:22px;letter-spacing:0.666px;font-family:'Liberation Serif',serif;font-weight:bold;color:#000;-webkit-text-stroke:0.35px #000;">VALLE</span>
<span class="t" style="left:825.7px;top:271.80px;font-size:22px;letter-spacing:0.785px;font-family:'Liberation Serif',serif;font-weight:bold;color:#000;-webkit-text-stroke:0.35px #000;">HERMOSO</span>
<span class="t" style="left:523.7px;top:297.80px;font-size:22px;letter-spacing:0.195px;font-family:'Liberation Serif',serif;font-weight:bold;color:#000;-webkit-text-stroke:0.35px #000;">ACTA</span>
<span class="t" style="left:594.1px;top:297.80px;font-size:22px;letter-spacing:-0.414px;font-family:'Liberation Serif',serif;font-weight:bold;color:#000;-webkit-text-stroke:0.35px #000;">ENTREGA</span>
<span class="t" style="left:711.0px;top:297.80px;font-size:22px;letter-spacing:4.200px;font-family:'Liberation Serif',serif;font-weight:bold;color:#000;-webkit-text-stroke:0.35px #000;">–</span>
<span class="t" style="left:732.0px;top:297.80px;font-size:22px;letter-spacing:0.198px;font-family:'Liberation Serif',serif;font-weight:bold;color:#000;-webkit-text-stroke:0.35px #000;">RECEPCIÓN</span>
<!-- table anchor -->
<div class="a" style="left:384px;top:336px;width:15px;height:15px;border:1px solid #a0a0a0;box-sizing:border-box;background:#fff;"></div>
<svg style="left:386px;top:338px" width="11" height="11" viewBox="0 0 11 11" fill="#555" stroke="none"><rect x="4.95" y="1.4" width="1.2" height="8.2"/><rect x="1.4" y="4.95" width="8.2" height="1.2"/><path d="M5.55 0L7.2 2.2H3.9ZM5.55 11L7.2 8.8H3.9ZM0 5.55L2.2 3.9V7.2ZM11 5.55L8.8 3.9V7.2Z"/></svg>
<!-- instruction box -->
<div class="a" style="left:399px;top:351px;width:593px;height:224px;background:#f2f2f2;border:1px solid #000;box-sizing:border-box;"></div>
<span class="t" style="left:407.1px;top:351.60px;font-size:12px;letter-spacing:-0.002px;color:#000;font-weight:bold;">Instrucciones:</span>
<span class="t" style="left:495.1px;top:351.60px;font-size:12px;color:#000;">El</span>
<span class="t" style="left:510.5px;top:351.60px;font-size:12px;letter-spacing:0.351px;color:#000;">Administrador</span>
<span class="t" style="left:591.69px;top:351.60px;font-size:12px;color:#000;">del</span>
<span class="t" style="left:612.1px;top:351.60px;font-size:12px;letter-spacing:0.122px;color:#000;">contrato,</span>
<span class="t" style="left:664.4px;top:351.60px;font-size:12px;color:#000;">de</span>
<span class="t" style="left:682.7px;top:351.60px;font-size:12px;letter-spacing:0.305px;color:#000;">conformidad</span>
<span class="t" style="left:755.32px;top:351.60px;font-size:12px;color:#000;">con</span>
<span class="t" style="left:779.1px;top:351.60px;font-size:12px;color:#000;">el</span>
<span class="t" style="left:793.2px;top:351.60px;font-size:12px;letter-spacing:0.406px;color:#000;">numeral</span>
<span class="t" style="left:842.1px;top:351.60px;font-size:12px;color:#000;">16</span>
<span class="t" style="left:860.99px;top:351.60px;font-size:12px;color:#000;">del</span>
<span class="t" style="left:881.46px;top:351.60px;font-size:12px;color:#000;">Art.</span>
<span class="t" style="left:906.48px;top:351.60px;font-size:12px;color:#000;">303</span>
<span class="t" style="left:931.49px;top:351.60px;font-size:12px;color:#000;">del</span>
<span class="t" style="left:952.0px;top:351.60px;font-size:12px;letter-spacing:0.219px;color:#000;">nuevo</span>
<span class="t" style="left:407.6px;top:367.80px;font-size:12px;letter-spacing:0.288px;color:#000;">Reglamento</span>
<span class="t" style="left:477.1px;top:367.80px;font-size:12px;letter-spacing:0.242px;color:#000;">General</span>
<span class="t" style="left:523.3px;top:367.80px;font-size:12px;color:#000;">de</span>
<span class="t" style="left:538.0px;top:367.80px;font-size:12px;color:#000;">la</span>
<span class="t" style="left:551.0px;top:367.80px;font-size:12px;letter-spacing:0.266px;color:#000;">LOSNCP,</span>
<span class="t" style="left:607.0px;top:367.80px;font-size:12px;letter-spacing:0.371px;color:#000;">deberá</span>
<span class="t" style="left:648.2px;top:367.80px;font-size:12px;letter-spacing:0.185px;color:#000;">gestionar,</span>
<span class="t" style="left:704.1px;top:367.80px;font-size:12px;letter-spacing:0.271px;color:#000;">elaborar</span>
<span class="t" style="left:752.1px;top:367.80px;font-size:12px;color:#000;">e</span>
<span class="t" style="left:760.7px;top:367.80px;font-size:12px;letter-spacing:0.264px;color:#000;">intervenir</span>
<span class="t" style="left:814.5px;top:367.80px;font-size:12px;color:#000;">en</span>
<span class="t" style="left:829.9px;top:367.80px;font-size:12px;color:#000;">la</span>
<span class="t" style="left:842.4px;top:367.80px;font-size:12px;letter-spacing:0.174px;color:#000;">recepción</span>
<span class="t" style="left:898.0px;top:367.80px;font-size:12px;letter-spacing:0.243px;color:#000;">formal</span>
<span class="t" style="left:935.69px;top:367.80px;font-size:12px;color:#000;">del</span>
<span class="t" style="left:954.2px;top:367.80px;font-size:12px;letter-spacing:-0.184px;color:#000;">objeto</span>
<span class="t" style="left:407.6px;top:383.60px;font-size:12px;color:#000;">de</span>
<span class="t" style="left:424.8px;top:383.60px;font-size:12px;letter-spacing:0.114px;color:#000;">contratación.</span>
<span class="t" style="left:407.1px;top:409.40px;font-size:12px;color:#000;font-weight:bold;">En</span>
<span class="t" style="left:426.0px;top:409.40px;font-size:12px;letter-spacing:0.102px;color:#000;font-weight:bold;">Obras:</span>
<span class="t" style="left:468.6px;top:409.40px;font-size:12px;letter-spacing:0.173px;color:#000;">Revisar</span>
<span class="t" style="left:512.16px;top:409.40px;font-size:12px;color:#000;">Art.</span>
<span class="t" style="left:534.98px;top:409.40px;font-size:12px;color:#000;">317</span>
<span class="t" style="left:558.89px;top:409.40px;font-size:12px;color:#000;">del</span>
<span class="t" style="left:577.1px;top:409.40px;font-size:12px;letter-spacing:0.159px;color:#000;">nuevo</span>
<span class="t" style="left:614.4px;top:409.40px;font-size:12px;letter-spacing:0.208px;color:#000;">Reglamento</span>
<span class="t" style="left:683.2px;top:409.40px;font-size:12px;letter-spacing:0.228px;color:#000;">General</span>
<span class="t" style="left:729.5px;top:409.40px;font-size:12px;color:#000;">de</span>
<span class="t" style="left:744.2px;top:409.40px;font-size:12px;color:#000;">la</span>
<span class="t" style="left:757.0px;top:409.40px;font-size:12px;letter-spacing:0.073px;color:#000;">LOSNCP</span>
<span class="t" style="left:809.4px;top:409.40px;font-size:12px;color:#000;">y</span>
<span class="t" style="left:819.16px;top:409.40px;font-size:12px;color:#000;">NCI</span>
<span class="t" style="left:842.7px;top:409.40px;font-size:12px;letter-spacing:0.228px;color:#000;">408-29.</span>
<span class="t" style="left:407.1px;top:436.30px;font-size:12px;color:#000;font-weight:bold;">En</span>
<span class="t" style="left:426.0px;top:436.30px;font-size:12px;letter-spacing:-0.019px;color:#000;font-weight:bold;">Consultorías:</span>
<span class="t" style="left:506.9px;top:436.30px;font-size:12px;letter-spacing:0.159px;color:#000;">Revisar</span>
<span class="t" style="left:550.46px;top:436.30px;font-size:12px;color:#000;">Art.</span>
<span class="t" style="left:572.98px;top:436.30px;font-size:12px;color:#000;">318</span>
<span class="t" style="left:597.99px;top:436.30px;font-size:12px;color:#000;">del</span>
<span class="t" style="left:615.8px;top:436.30px;font-size:12px;letter-spacing:0.359px;color:#000;">nuevo</span>
<span class="t" style="left:651.9px;top:436.30px;font-size:12px;letter-spacing:0.208px;color:#000;">Reglamento</span>
<span class="t" style="left:721.0px;top:436.30px;font-size:12px;letter-spacing:0.185px;color:#000;">General</span>
<span class="t" style="left:767.3px;top:436.30px;font-size:12px;color:#000;">de</span>
<span class="t" style="left:782.0px;top:436.30px;font-size:12px;color:#000;">la</span>
<span class="t" style="left:795.7px;top:436.30px;font-size:12px;letter-spacing:0.308px;color:#000;">LOSNCP.</span>
<span class="t" style="left:407.1px;top:462.50px;font-size:12px;color:#000;font-weight:bold;">En</span>
<span class="t" style="left:426.0px;top:462.50px;font-size:12px;letter-spacing:0.092px;color:#000;font-weight:bold;">Bienes:</span>
<span class="t" style="left:473.8px;top:462.50px;font-size:12px;letter-spacing:0.159px;color:#000;">Revisar</span>
<span class="t" style="left:517.16px;top:462.50px;font-size:12px;color:#000;">Art.</span>
<span class="t" style="left:540.18px;top:462.50px;font-size:12px;color:#000;">319</span>
<span class="t" style="left:564.79px;top:462.50px;font-size:12px;color:#000;">del</span>
<span class="t" style="left:582.6px;top:462.50px;font-size:12px;letter-spacing:0.239px;color:#000;">nuevo</span>
<span class="t" style="left:619.5px;top:462.50px;font-size:12px;letter-spacing:0.168px;color:#000;">Reglamento</span>
<span class="t" style="left:688.3px;top:462.50px;font-size:12px;letter-spacing:0.200px;color:#000;">General</span>
<span class="t" style="left:734.2px;top:462.50px;font-size:12px;color:#000;">de</span>
<span class="t" style="left:749.2px;top:462.50px;font-size:12px;color:#000;">la</span>
<span class="t" style="left:762.9px;top:462.50px;font-size:12px;letter-spacing:0.240px;color:#000;">LOSNCP</span>
<span class="t" style="left:816.0px;top:462.50px;font-size:12px;color:#000;">y</span>
<span class="t" style="left:825.5px;top:462.50px;font-size:12px;letter-spacing:0.066px;color:#000;">Arts.</span>
<span class="t" style="left:854.2px;top:462.50px;font-size:12px;color:#000;">33</span>
<span class="t" style="left:870.7px;top:462.50px;font-size:12px;color:#000;">y</span>
<span class="t" style="left:880.4px;top:462.50px;font-size:12px;color:#000;">34</span>
<span class="t" style="left:897.99px;top:462.50px;font-size:12px;color:#000;">del</span>
<span class="t" style="left:915.7px;top:462.50px;font-size:12px;letter-spacing:0.103px;color:#000;">&quot;Reglamento</span>
<span class="t" style="left:407.6px;top:478.60px;font-size:12px;letter-spacing:0.257px;color:#000;">General</span>
<span class="t" style="left:454.2px;top:478.60px;font-size:12px;letter-spacing:0.013px;color:#000;">Sustitutivo</span>
<span class="t" style="left:512.68px;top:478.60px;font-size:12px;color:#000;">para</span>
<span class="t" style="left:539.5px;top:478.60px;font-size:12px;color:#000;">la</span>
<span class="t" style="left:552.4px;top:478.60px;font-size:12px;letter-spacing:0.186px;color:#000;">administración,</span>
<span class="t" style="left:638.3px;top:478.60px;font-size:12px;letter-spacing:0.031px;color:#000;">utilización,</span>
<span class="t" style="left:697.1px;top:478.60px;font-size:12px;letter-spacing:0.157px;color:#000;">manejo</span>
<span class="t" style="left:739.4px;top:478.60px;font-size:12px;color:#000;">y</span>
<span class="t" style="left:748.2px;top:478.60px;font-size:12px;letter-spacing:0.196px;color:#000;">control</span>
<span class="t" style="left:787.9px;top:478.60px;font-size:12px;color:#000;">de</span>
<span class="t" style="left:803.83px;top:478.60px;font-size:12px;color:#000;">los</span>
<span class="t" style="left:822.1px;top:478.60px;font-size:12px;letter-spacing:0.421px;color:#000;">bienes</span>
<span class="t" style="left:861.3px;top:478.60px;font-size:12px;color:#000;">e</span>
<span class="t" style="left:869.6px;top:478.60px;font-size:12px;letter-spacing:0.334px;color:#000;">inventarios</span>
<span class="t" style="left:933.19px;top:478.60px;font-size:12px;color:#000;">del</span>
<span class="t" style="left:951.3px;top:478.60px;font-size:12px;letter-spacing:-0.031px;color:#000;">Sector</span>
<span class="t" style="left:407.6px;top:494.50px;font-size:12px;letter-spacing:0.216px;color:#000;">Público&quot;.</span>
<span class="t" style="left:407.1px;top:521.30px;font-size:12px;color:#000;font-weight:bold;">En</span>
<span class="t" style="left:426.0px;top:521.30px;font-size:12px;letter-spacing:0.062px;color:#000;font-weight:bold;">Servicios:</span>
<span class="t" style="left:487.0px;top:521.30px;font-size:12px;letter-spacing:0.159px;color:#000;">Revisar</span>
<span class="t" style="left:530.36px;top:521.30px;font-size:12px;color:#000;">Art.</span>
<span class="t" style="left:553.48px;top:521.30px;font-size:12px;color:#000;">320</span>
<span class="t" style="left:577.89px;top:521.30px;font-size:12px;color:#000;">del</span>
<span class="t" style="left:596.3px;top:521.30px;font-size:12px;letter-spacing:0.199px;color:#000;">nuevo</span>
<span class="t" style="left:632.4px;top:521.30px;font-size:12px;letter-spacing:0.198px;color:#000;">Reglamento</span>
<span class="t" style="left:701.6px;top:521.30px;font-size:12px;letter-spacing:0.185px;color:#000;">General</span>
<span class="t" style="left:747.7px;top:521.30px;font-size:12px;color:#000;">de</span>
<span class="t" style="left:762.4px;top:521.30px;font-size:12px;color:#000;">la</span>
<span class="t" style="left:775.7px;top:521.30px;font-size:12px;letter-spacing:0.366px;color:#000;">LOSNCP.</span>
<span class="t" style="left:407.1px;top:547.30px;font-size:12px;color:#000;font-weight:bold;">En</span>
<span class="t" style="left:426.0px;top:547.30px;font-size:12px;letter-spacing:0.112px;color:#000;font-weight:bold;">ínfimas</span>
<span class="t" style="left:471.6px;top:547.30px;font-size:12px;letter-spacing:-0.021px;color:#000;font-weight:bold;">cuantías:</span>
<span class="t" style="left:527.7px;top:547.30px;font-size:12px;letter-spacing:0.188px;color:#000;">Revisar</span>
<span class="t" style="left:571.16px;top:547.30px;font-size:12px;color:#000;">Art.</span>
<span class="t" style="left:594.18px;top:547.30px;font-size:12px;color:#000;">321</span>
<span class="t" style="left:617.59px;top:547.30px;font-size:12px;color:#000;">del</span>
<span class="t" style="left:637.4px;top:547.30px;font-size:12px;letter-spacing:0.219px;color:#000;">nuevo</span>
<span class="t" style="left:673.2px;top:547.30px;font-size:12px;letter-spacing:0.208px;color:#000;">Reglamento</span>
<span class="t" style="left:742.3px;top:547.30px;font-size:12px;letter-spacing:0.185px;color:#000;">General</span>
<span class="t" style="left:788.6px;top:547.30px;font-size:12px;color:#000;">de</span>
<span class="t" style="left:803.9px;top:547.30px;font-size:12px;color:#000;">la</span>
<span class="t" style="left:816.0px;top:547.30px;font-size:12px;letter-spacing:0.280px;color:#000;">LOSNCP.</span>
<div class="a" style="left:992px;top:575px;width:15px;height:15px;border:1px solid #a6a6a6;box-sizing:border-box;background:#fff;"></div>
<!-- body paragraph -->
<div class="a" style="left:288px;top:590px;width:791px;height:116px;overflow:hidden;">
<div class="a" style="left:112px;top:24.3px;width:267px;height:18.6px;background:#ffff00;"></div>
<div class="a" style="left:190.9px;top:82.3px;width:480.3px;height:18.6px;background:#ffff00;"></div>
<span class="t" style="left:112.3px;top:4.70px;font-size:16px;letter-spacing:0.409px;font-family:'Liberation Serif',serif;color:#000;">En</span>
<span class="t" style="left:135.4px;top:4.70px;font-size:16px;letter-spacing:1.027px;font-family:'Liberation Serif',serif;color:#000;">la</span>
<span class="t" style="left:153.5px;top:4.70px;font-size:16px;letter-spacing:1.089px;font-family:'Liberation Serif',serif;color:#000;">Parroquia</span>
<span class="t" style="left:230.0px;top:4.70px;font-size:16px;letter-spacing:0.485px;font-family:'Liberation Serif',serif;color:#000;">Valle</span>
<span class="t" style="left:269.3px;top:4.70px;font-size:16px;letter-spacing:1.218px;font-family:'Liberation Serif',serif;color:#000;">Hermoso,</span>
<span class="t" style="left:344.7px;top:4.70px;font-size:16px;letter-spacing:0.697px;font-family:'Liberation Serif',serif;color:#000;">Provincia</span>
<span class="t" style="left:415.7px;top:4.70px;font-size:16px;letter-spacing:1.245px;font-family:'Liberation Serif',serif;color:#000;">de</span>
<span class="t" style="left:436.8px;top:4.70px;font-size:16px;letter-spacing:0.769px;font-family:'Liberation Serif',serif;color:#000;">Santo</span>
<span class="t" style="left:482.0px;top:4.70px;font-size:16px;letter-spacing:0.721px;font-family:'Liberation Serif',serif;color:#000;">Domingo</span>
<span class="t" style="left:551.5px;top:4.70px;font-size:16px;letter-spacing:1.245px;font-family:'Liberation Serif',serif;color:#000;">de</span>
<span class="t" style="left:571.1px;top:4.70px;font-size:16px;letter-spacing:0.943px;font-family:'Liberation Serif',serif;color:#000;">los</span>
<span class="t" style="left:597.8px;top:4.70px;font-size:16px;letter-spacing:0.689px;font-family:'Liberation Serif',serif;color:#000;">Tsáchilas,</span>
<span class="t" style="left:672.0px;top:4.70px;font-size:16px;letter-spacing:0.391px;font-family:'Liberation Serif',serif;color:#000;">a</span>
<span class="t" style="left:683.5px;top:4.70px;font-size:16px;letter-spacing:0.676px;font-family:'Liberation Serif',serif;color:#000;">los</span>
<span class="t" style="left:112.3px;top:28.10px;font-size:11.4px;letter-spacing:1.055px;font-family:'Liberation Serif',serif;color:#000;transform:scaleX(1.32);transform-origin:0 0;">01</span>
<span class="t" style="left:135.0px;top:24.10px;font-size:16px;letter-spacing:0.880px;font-family:'Liberation Serif',serif;color:#000;">días</span>
<span class="t" style="left:169.2px;top:24.10px;font-size:16px;letter-spacing:1.706px;font-family:'Liberation Serif',serif;color:#000;">mes</span>
<span class="t" style="left:204.6px;top:24.10px;font-size:16px;letter-spacing:0.845px;font-family:'Liberation Serif',serif;color:#000;">de</span>
<span class="t" style="left:228.1px;top:24.10px;font-size:16px;letter-spacing:1.140px;font-family:'Liberation Serif',serif;color:#000;">septiembre</span>
<span class="t" style="left:313.5px;top:24.10px;font-size:16px;letter-spacing:0.718px;font-family:'Liberation Serif',serif;color:#000;">del</span>
<span class="t" style="left:342.2px;top:28.10px;font-size:11.4px;letter-spacing:1.380px;font-family:'Liberation Serif',serif;color:#000;transform:scaleX(1.32);transform-origin:0 0;">2022</span>
<span class="t" style="left:378.9px;top:24.10px;font-size:16px;letter-spacing:-0.600px;font-family:'Liberation Serif',serif;color:#000;">,</span>
<span class="t" style="left:388.5px;top:24.10px;font-size:16px;letter-spacing:0.965px;font-family:'Liberation Serif',serif;color:#000;">comparecen,</span>
<span class="t" style="left:485.7px;top:24.10px;font-size:16px;letter-spacing:0.724px;font-family:'Liberation Serif',serif;color:#000;">por</span>
<span class="t" style="left:516.8px;top:24.10px;font-size:16px;letter-spacing:1.497px;font-family:'Liberation Serif',serif;color:#000;">una</span>
<span class="t" style="left:550.0px;top:24.10px;font-size:16px;letter-spacing:0.919px;font-family:'Liberation Serif',serif;color:#000;">parte,</span>
<span class="t" style="left:597.1px;top:24.10px;font-size:16px;letter-spacing:0.727px;font-family:'Liberation Serif',serif;color:#000;">la</span>
<span class="t" style="left:616.4px;top:24.10px;font-size:16px;letter-spacing:0.941px;font-family:'Liberation Serif',serif;color:#000;">comisión</span>
<span class="t" style="left:687.4px;top:24.10px;font-size:16px;letter-spacing:0.845px;font-family:'Liberation Serif',serif;color:#000;">de</span>
<span class="t" style="left:111.9px;top:43.70px;font-size:16px;letter-spacing:0.679px;font-family:'Liberation Serif',serif;color:#000;">recepción</span>
<span class="t" style="left:182.5px;top:43.70px;font-size:16px;letter-spacing:0.891px;font-family:'Liberation Serif',serif;color:#000;">designada</span>
<span class="t" style="left:258.0px;top:43.70px;font-size:16px;letter-spacing:1.791px;font-family:'Liberation Serif',serif;color:#000;">por</span>
<span class="t" style="left:287.0px;top:43.70px;font-size:16px;letter-spacing:0.527px;font-family:'Liberation Serif',serif;color:#000;">la</span>
<span class="t" style="left:302.4px;top:43.70px;font-size:16px;letter-spacing:0.805px;font-family:'Liberation Serif',serif;color:#000;">Entidad</span>
<span class="t" style="left:361.3px;top:43.70px;font-size:16px;letter-spacing:1.047px;font-family:'Liberation Serif',serif;color:#000;">Contratante,</span>
<span class="t" style="left:453.3px;top:43.70px;font-size:16px;letter-spacing:1.108px;font-family:'Liberation Serif',serif;color:#000;">integrada</span>
<span class="t" style="left:525.3px;top:43.70px;font-size:16px;letter-spacing:1.057px;font-family:'Liberation Serif',serif;color:#000;">por</span>
<span class="t" style="left:550.7px;top:43.70px;font-size:16px;letter-spacing:0.377px;font-family:'Liberation Serif',serif;color:#000;">la</span>
<span class="t" style="left:567.0px;top:43.70px;font-size:16px;letter-spacing:-0.007px;font-family:'Liberation Serif',serif;color:#000;">Lic.</span>
<span class="t" style="left:595.5px;top:43.70px;font-size:16px;letter-spacing:0.692px;font-family:'Liberation Serif',serif;color:#000;">Maribel</span>
<span class="t" style="left:655.0px;top:43.70px;font-size:16px;letter-spacing:0.354px;font-family:'Liberation Serif',serif;color:#000;">Lozada</span>
<span class="t" style="left:112.3px;top:63.30px;font-size:16px;letter-spacing:0.780px;font-family:'Liberation Serif',serif;color:#000;">Garcés</span>
<span class="t" style="left:165.6px;top:63.30px;font-size:15.6px;letter-spacing:1.154px;font-family:'Liberation Serif',serif;color:#000;font-weight:bold;">SECRETARIA-TESORERA</span>
<span class="t" style="left:385.6px;top:63.30px;font-size:15.6px;letter-spacing:1.041px;font-family:'Liberation Serif',serif;color:#000;font-weight:bold;">DEL</span>
<span class="t" style="left:426.5px;top:63.30px;font-size:15.6px;letter-spacing:0.681px;font-family:'Liberation Serif',serif;color:#000;font-weight:bold;">GAD</span>
<span class="t" style="left:468.7px;top:63.30px;font-size:15.6px;letter-spacing:1.702px;font-family:'Liberation Serif',serif;color:#000;font-weight:bold;">PR</span>
<span class="t" style="left:499.0px;top:63.30px;font-size:15.6px;letter-spacing:0.896px;font-family:'Liberation Serif',serif;color:#000;font-weight:bold;">VALLE</span>
<span class="t" style="left:561.6px;top:63.30px;font-size:15.6px;letter-spacing:1.464px;font-family:'Liberation Serif',serif;color:#000;font-weight:bold;">HERMOSO</span>
<span class="t" style="left:652.9px;top:63.30px;font-size:16px;letter-spacing:-1.053px;font-family:'Liberation Serif',serif;color:#000;">;</span>
<span class="t" style="left:662.7px;top:63.30px;font-size:16px;letter-spacing:1.016px;font-family:'Liberation Serif',serif;color:#000;">y,</span>
<span class="t" style="left:679.7px;top:63.30px;font-size:16px;letter-spacing:1.057px;font-family:'Liberation Serif',serif;color:#000;">por</span>
<span class="t" style="left:111.9px;top:82.70px;font-size:16px;letter-spacing:1.106px;font-family:'Liberation Serif',serif;color:#000;">otra</span>
<span class="t" style="left:144.7px;top:82.70px;font-size:16px;letter-spacing:1.019px;font-family:'Liberation Serif',serif;color:#000;">parte,</span>
<span class="t" style="left:190.9px;top:82.70px;font-size:16px;letter-spacing:0.618px;font-family:'Liberation Serif',serif;color:#000;">del</span>
<span class="t" style="left:217.4px;top:82.70px;font-size:16px;letter-spacing:0.952px;font-family:'Liberation Serif',serif;color:#000;">Sr.</span>
<span class="t" style="left:242.8px;top:82.70px;font-size:16px;letter-spacing:0.406px;font-family:'Liberation Serif',serif;color:#000;">León</span>
<span class="t" style="left:282.6px;top:82.70px;font-size:16px;letter-spacing:1.020px;font-family:'Liberation Serif',serif;color:#000;">Sotomayor</span>
<span class="t" style="left:365.3px;top:82.70px;font-size:16px;letter-spacing:0.684px;font-family:'Liberation Serif',serif;color:#000;">Fabricio</span>
<span class="t" style="left:429.0px;top:82.70px;font-size:16px;letter-spacing:0.475px;font-family:'Liberation Serif',serif;color:#000;">Nicolas</span>
<span class="t" style="left:484.2px;top:82.70px;font-size:16px;letter-spacing:0.782px;font-family:'Liberation Serif',serif;color:#000;">propietario</span>
<span class="t" style="left:568.5px;top:82.70px;font-size:16px;letter-spacing:1.245px;font-family:'Liberation Serif',serif;color:#000;">de</span>
<span class="t" style="left:591.7px;top:82.70px;font-size:15.6px;letter-spacing:0.821px;font-family:'Liberation Serif',serif;color:#000;font-weight:bold;">NENICCO</span>
<span class="t" style="left:671.3px;top:82.70px;font-size:16px;letter-spacing:-0.600px;font-family:'Liberation Serif',serif;color:#000;">,</span>
<span class="t" style="left:679.7px;top:82.70px;font-size:16px;letter-spacing:1.057px;font-family:'Liberation Serif',serif;color:#000;">por</span>
<span class="t" style="left:111.9px;top:102.10px;font-size:16px;letter-spacing:1.249px;font-family:'Liberation Serif',serif;color:#000;">sus</span>
<span class="t" style="left:139.8px;top:102.10px;font-size:16px;letter-spacing:0.814px;font-family:'Liberation Serif',serif;color:#000;">propios</span>
<span class="t" style="left:198.7px;top:102.10px;font-size:16px;letter-spacing:0.916px;font-family:'Liberation Serif',serif;color:#000;">derechos,</span>
<span class="t" style="left:270.1px;top:102.10px;font-size:16px;letter-spacing:1.195px;font-family:'Liberation Serif',serif;color:#000;">en</span>
<span class="t" style="left:293.6px;top:102.10px;font-size:16px;letter-spacing:0.642px;font-family:'Liberation Serif',serif;color:#000;">calidad</span>
<span class="t" style="left:349.5px;top:102.10px;font-size:16px;letter-spacing:1.245px;font-family:'Liberation Serif',serif;color:#000;">de</span>
<span class="t" style="left:371.6px;top:102.10px;font-size:16px;letter-spacing:0.730px;font-family:'Liberation Serif',serif;color:#000;">contratista.</span>
<span class="t" style="left:458.4px;top:102.10px;font-size:16px;letter-spacing:0.508px;font-family:'Liberation Serif',serif;color:#000;">Quienes,</span>
<span class="t" style="left:524.5px;top:102.10px;font-size:16px;letter-spacing:1.245px;font-family:'Liberation Serif',serif;color:#000;">en</span>
<span class="t" style="left:546.1px;top:102.10px;font-size:16px;letter-spacing:1.077px;font-family:'Liberation Serif',serif;color:#000;">cumplimiento</span>
<span class="t" style="left:651.9px;top:102.10px;font-size:16px;letter-spacing:0.651px;font-family:'Liberation Serif',serif;color:#000;">del</span>
<span class="t" style="left:678.9px;top:102.10px;font-size:16px;letter-spacing:-0.007px;font-family:'Liberation Serif',serif;color:#000;">Art.</span>
</div>
<!-- ===== SCROLLBAR ===== -->
<div class="a" style="left:1343px;top:181px;width:17px;height:525px;background:#dadada;"></div>
<div class="a" style="left:1344px;top:183px;width:15px;height:15px;background:#fff;border:1px solid #9a9a9a;box-sizing:border-box;"></div>
<svg style="left:1348px;top:188px" width="7" height="4" viewBox="0 0 7 4" fill="#666"><path d="M0 4H7L3.5 0Z"/></svg>
<div class="a" style="left:1344px;top:210px;width:15px;height:45px;background:#fff;border:1px solid #9a9a9a;box-sizing:border-box;"></div>
<div class="a" style="left:1344px;top:689.5px;width:15px;height:15px;background:#fff;border:1px solid #9a9a9a;box-sizing:border-box;"></div>
<svg style="left:1348px;top:695px" width="7" height="4" viewBox="0 0 7 4" fill="#666"><path d="M0 0H7L3.5 4Z"/></svg>
<!-- ===== STATUS BAR ===== -->
<div class="a" style="left:0;top:706px;width:1360px;height:22px;background:#f3f3f3;border-top:1px solid #c8c8c8;box-sizing:border-box;"></div>
<span class="t" style="left:8.5px;top:710.00px;font-size:12px;letter-spacing:-0.466px;color:#444;">Página 1 de 5</span>
<span class="t" style="left:103px;top:710.00px;font-size:12px;letter-spacing:-0.505px;color:#444;">1014 palabras</span>
<svg style="left:192px;top:710px" width="15" height="13" viewBox="0 0 15 13" fill="none" stroke="#6a6a6a" stroke-width="1.1">
 <path d="M4.9 0.6H0.6V10.5H4.9L6.4 12.2"/><path d="M4.9 0.6L6.4 2L7.9 0.6H12.6V2"/><path d="M6.4 2V12.4M8 10.5H12.8"/>
 <path d="M9.5 3.7L13.6 8.3M13.6 3.7L9.5 8.3" stroke="#555" stroke-width="1.5"/>
</svg>
<span class="t" style="left:224.5px;top:710.00px;font-size:12px;letter-spacing:-0.494px;color:#444;">Español (Ecuador)</span>
<svg style="left:334px;top:710px" width="17" height="16" viewBox="0 0 17 16" fill="none" stroke="#5a5a5a" stroke-width="1.1">
 <path d="M4.6 1.6A5.6 5.6 0 0 0 6.2 12.4" stroke-dasharray="3.4 1.2"/>
 <path d="M6.6 0.2V5.6M4.6 4L6.6 6L8.2 4.6" stroke-width="1"/><path d="M6.6 5.4H12.6M10.8 3.4L12.8 5.4L10.8 7.4" stroke-width="1"/>
 <path d="M8.4 7.8L15.4 14.4" stroke="#444" stroke-width="2"/><path d="M15 8.2L8.4 14.6" stroke="#444" stroke-width="1.6"/>
</svg>
<span class="t" style="left:353px;top:710.00px;font-size:12px;letter-spacing:-0.275px;color:#444;">Accesibilidad: es necesario investigar</span>
<!-- view buttons -->
<svg style="left:1072.5px;top:710px" width="14" height="13" viewBox="0 0 14 13" fill="none" stroke="#666" stroke-width="1">
 <path d="M7 1.5Q4 0 0.5 1V11Q4 10 7 11.5Q10 10 13.5 11V1Q10 0 7 1.5Z"/><path d="M7 1.5V12.6"/>
 <path d="M2 3.4H5.4M2 5.4H5.4M2 7.4H5.4M8.6 3.4H12M8.6 5.4H12M8.6 7.4H12" stroke-width="0.8"/>
</svg>
<div class="a" style="left:1100px;top:707px;width:40px;height:21px;background:#c8c8c8;"></div>
<svg style="left:1113px;top:710.5px" width="14" height="12" viewBox="0 0 14 12" fill="#f3f3f3" stroke="#666" stroke-width="1">
 <rect x="0.5" y="0.5" width="13" height="11"/><path d="M2.5 2.8H11.5M2.5 4.9H11.5M2.5 7H11.5M2.5 9.1H11.5" stroke-width="0.9"/>
</svg>
<svg style="left:1153px;top:710.5px" width="15" height="13" viewBox="0 0 15 13" fill="none" stroke="#666" stroke-width="1">
 <path d="M6 10.5H0.5V0.5H11.5V5"/><path d="M2.2 2.8H9.8M2.2 4.9H9.8M2.2 7H6.5" stroke-width="0.9"/>
 <circle cx="10.6" cy="8.8" r="3.6" fill="#777" stroke="#555"/><path d="M8.2 7.6Q10.6 8.8 9.8 11.4M12 6.2Q11 8 13.6 9.4" stroke="#ddd" stroke-width="0.7"/>
</svg>
<div class="a" style="left:1186px;top:715.5px;width:8px;height:1px;background:#555;"></div>
<div class="a" style="left:1199px;top:715.5px;width:100px;height:1px;background:#767676;"></div>
<div class="a" style="left:1247px;top:711px;width:5px;height:11.5px;background:#555;"></div>
<div class="a" style="left:1304.5px;top:715.5px;width:8px;height:1px;background:#555;"></div>
<div class="a" style="left:1308px;top:712px;width:1px;height:8px;background:#555;"></div>
<span class="t" style="left:1326px;top:710.00px;font-size:12px;letter-spacing:-1.051px;color:#444;">100%</span>
<!-- ===== TASKBAR ===== -->
<div class="a" style="left:0;top:728px;width:1360px;height:40px;background:#101010;"></div>
<div class="a" style="left:197px;top:728px;width:44px;height:40px;background:#2d2d2d;"></div>
<div class="a" style="left:241px;top:728px;width:4px;height:40px;background:#242424;"></div>
<!-- start -->
<svg style="left:16px;top:740px" width="16" height="16" viewBox="0 0 16 16" fill="#fff"><path d="M0 2.3L6.6 1.4V7.6H0ZM7.4 1.3L16 0V7.6H7.4ZM0 8.4H6.6V14.6L0 13.7ZM7.4 8.4H16V16L7.4 14.7Z"/></svg>
<!-- search -->
<svg style="left:63.5px;top:739.5px" width="17" height="17" viewBox="0 0 17 17" fill="none" stroke="#fff" stroke-width="1.4"><circle cx="10.6" cy="6.2" r="5.2"/><path d="M6.8 10L0.6 16.2"/></svg>
<!-- edge -->
<svg style="left:111px;top:735.6px" width="24.4" height="24" viewBox="0 0 24 24">
 <defs><linearGradient id="e1" x1="0" y1="0.2" x2="0.8" y2="1"><stop offset="0" stop-color="#2aa4ea"/><stop offset="1" stop-color="#1262b8"/></linearGradient>
 <linearGradient id="e2" x1="0" y1="0.6" x2="1" y2="0.2"><stop offset="0" stop-color="#2a9fe6"/><stop offset="0.55" stop-color="#37c3c9"/><stop offset="1" stop-color="#55dd62"/></linearGradient></defs>
 <circle cx="12" cy="12" r="12" fill="url(#e1)"/>
 <path d="M0.2 11Q1 0.2 12 0.1Q22.6 0.4 23.9 10.6Q23.6 14.6 19.4 15.4H13.2Q14.8 13 13.8 10.6Q12.2 7.6 8.4 8Q3 8.8 2.2 15.4Q0 13.4 0.2 11Z" fill="url(#e2)"/>
 <path d="M8.6 8.1Q3.8 9.6 4.2 15.2Q5.4 21.6 12.6 23.9Q6 22.8 2.2 16.8Q2.2 10.2 8.6 8.1Z" fill="#0f56a8"/>
 <path d="M9.4 13.6Q8.8 18.4 13 20.4Q17.8 22.2 22.4 17.4Q19.4 19.6 16 18.2Q12.6 16.6 12.6 13.8Z" fill="#0e4c96"/>
 <path d="M8.8 10.4Q12.6 9.2 13.4 12Q13.8 13.8 12.8 15.4H19.8Q18.6 17.8 15.6 17.2Q10.6 16.6 9 13.4Q8.4 12 8.8 10.4Z" fill="#101010"/>
</svg>
<!-- chrome -->
<svg style="left:161px;top:736.8px" width="22" height="22" viewBox="0 0 23 23">
 <circle cx="11.5" cy="11.5" r="11.5" fill="#ea4335"/>
 <path d="M11.5 11.5L6.7 21.95A11.5 11.5 0 0 0 23 11.5A11.5 11.5 0 0 0 21.45 5.75H11.5Z" fill="#fbbc05"/>
 <path d="M11.5 11.5L1.55 5.75A11.5 11.5 0 0 0 5.75 21.45L11.5 17Z" fill="#34a853"/>
 <path d="M1.55 5.75A11.5 11.5 0 0 1 21.45 5.75H11.5Z" fill="#ea4335"/>
 <path d="M6.8 14.2L11.5 22.9A11.5 11.5 0 0 1 5.75 21.45Z" fill="#34a853"/>
 <circle cx="11.5" cy="11.5" r="5.4" fill="#fff"/><circle cx="11.5" cy="11.5" r="4.2" fill="#4285f4"/>
</svg>
<!-- word -->
<svg style="left:209px;top:737px" width="24" height="21" viewBox="0 0 24 21">
 <rect x="6" y="0" width="18" height="21" rx="1.2" fill="#2b7cd3"/><rect x="6" y="0" width="18" height="5.3" fill="#41a5ee"/><rect x="6" y="10.5" width="18" height="5.3" fill="#185abd"/><rect x="6" y="15.7" width="18" height="5.3" fill="#103f91"/>
 <rect x="0" y="4.5" width="12.5" height="12.5" rx="1" fill="#185abd"/>
 <path d="M2.4 7.4L4.2 14.2L6.2 8.6L8.2 14.2L10 7.4" fill="none" stroke="#fff" stroke-width="1.3"/>
</svg>
<!-- explorer -->
<svg style="left:258.5px;top:738.5px" width="22" height="19" viewBox="0 0 22 19">
 <path d="M0 1.2Q0 0 1.2 0H8L10 2.4H20.8Q22 2.4 22 3.6V6H0Z" fill="#e8a722"/>
 <rect x="0" y="3.6" width="22" height="14.4" rx="1" fill="#fcd354"/>
 <path d="M0 9H22V17Q22 18 21 18H1Q0 18 0 17Z" fill="#fbc335"/>
 <path d="M5.6 18.6V11.6H16.4V18.6H13.2V14.6H8.8V18.6Z" fill="#3a96dd"/>
</svg>
<!-- excel -->
<svg style="left:307px;top:737px" width="24" height="21" viewBox="0 0 24 21">
 <rect x="6" y="0" width="18" height="21" rx="1.2" fill="#21a366"/><rect x="15" y="0" width="9" height="5.3" fill="#33c481"/><rect x="6" y="5.3" width="9" height="5.3" fill="#107c41"/><rect x="15" y="10.5" width="9" height="5.3" fill="#107c41"/><rect x="6" y="10.5" width="9" height="10.5" fill="#185c37"/>
 <rect x="0" y="4.5" width="12.5" height="12.5" rx="1" fill="#107c41"/>
 <path d="M3.6 7.6L8.8 14M8.8 7.6L3.6 14" fill="none" stroke="#fff" stroke-width="1.5"/>
</svg>
<!-- firefox -->
<svg style="left:356.6px;top:735.6px" width="22.6" height="23.6" viewBox="0 0 24 25">
 <defs><radialGradient id="ff" cx="0.7" cy="0.2" r="0.9"><stop offset="0" stop-color="#ffe226"/><stop offset="0.5" stop-color="#ff8a16"/><stop offset="1" stop-color="#e31587"/></radialGradient></defs>
 <path d="M12 2.4Q14 0.8 13.6 0Q18 2.6 19.4 6Q21 5 20.6 3.6Q24 8 23.6 14Q22.6 23 13 24.6Q3 24.8 0.6 15Q0 10 3 6.6Q3 8.4 3.8 9Q6 4 12 2.4Z" fill="url(#ff)"/>
 <circle cx="12" cy="14.4" r="6.2" fill="#7b3fd6"/>
 <path d="M6 12Q8 8.6 12 9.6Q10 10.4 10 12.4Q12 12.6 12.2 14.4Q9.6 16.4 7 14.4Q8 19 12.6 19.6Q17.6 19 18.4 13Q20 20 13 22.6Q5.4 22 4.6 15Q4.8 13 6 12Z" fill="#ff9b22"/>
</svg>
<!-- chrome 2 with avatar -->
<svg style="left:406px;top:736.5px" width="26" height="25" viewBox="0 0 26 25">
 <circle cx="11.5" cy="11.5" r="11.5" fill="#ea4335"/>
 <path d="M11.5 11.5L6.7 21.95A11.5 11.5 0 0 0 23 11.5A11.5 11.5 0 0 0 21.45 5.75H11.5Z" fill="#fbbc05"/>
 <path d="M11.5 11.5L1.55 5.75A11.5 11.5 0 0 0 5.75 21.45L11.5 17Z" fill="#34a853"/>
 <path d="M1.55 5.75A11.5 11.5 0 0 1 21.45 5.75H11.5Z" fill="#ea4335"/>
 <circle cx="11.5" cy="11.5" r="5.4" fill="#fff"/><circle cx="11.5" cy="11.5" r="4.2" fill="#4285f4"/>
 <circle cx="17.6" cy="17.2" r="7.3" fill="#a8a8ac" stroke="#2a2a2a" stroke-width="0.6"/><path d="M12.4 13.4Q17.6 9.4 22.8 13.4Q20 17 17.6 16.2Q15 17 12.4 13.4Z" fill="#e6e6ea"/><path d="M13 21.4Q17.6 17.4 22.2 21.4Q17.6 25.6 13 21.4Z" fill="#dcdce0"/><path d="M16.2 11.4L17.6 17L19 11.4Z" fill="#f4f4f6"/>
 <circle cx="15.2" cy="16.6" r="1.5" fill="#2c2c30"/><circle cx="20" cy="16.6" r="1.5" fill="#2c2c30"/><circle cx="17.6" cy="20.6" r="1.3" fill="#3a3a3e"/><path d="M12.6 12.6Q11.6 15 12.6 17M22.6 12.6Q23.6 15 22.6 17" stroke="#3b4a7a" stroke-width="1" fill="none"/>
</svg>
<!-- acrobat -->
<svg style="left:455px;top:737px" width="22" height="21" viewBox="0 0 22 21">
 <rect x="0" y="0" width="21.5" height="21" rx="3.4" fill="#b30b00"/>
 <path d="M4 16.4Q6.6 11.6 9.6 10.2Q10.8 6.4 10 4.4Q11.4 3 11.8 5Q12 7.4 11.2 9.8Q12.8 12.4 17 12.6Q18.6 13.6 16.8 14.2Q13 14 10.4 11.8Q7.6 13.2 5.6 16.6Q4.4 17.6 4 16.4Z" fill="none" stroke="#fff" stroke-width="0.9" stroke-linejoin="round"/>
</svg>
<!-- running indicators -->
<div class="a" style="left:103px;top:766px;width:40px;height:2px;background:#76b9ed;"></div>
<div class="a" style="left:197px;top:766px;width:44px;height:2px;background:#76b9ed;"></div>
<div class="a" style="left:242px;top:766px;width:3px;height:2px;background:#5a8fb8;"></div>
<div class="a" style="left:250px;top:766px;width:40px;height:2px;background:#76b9ed;"></div>
<div class="a" style="left:299px;top:766px;width:31px;height:2px;background:#76b9ed;"></div><div class="a" style="left:331px;top:766px;width:8px;height:2px;background:#5a8fb8;"></div>
<div class="a" style="left:397px;top:766px;width:40px;height:2px;background:#76b9ed;"></div>
<div class="a" style="left:446px;top:766px;width:31px;height:2px;background:#76b9ed;"></div><div class="a" style="left:478px;top:766px;width:8px;height:2px;background:#5a8fb8;"></div>
<!-- tray -->
<svg style="left:1117px;top:745px" width="12" height="7" viewBox="0 0 12 7" fill="none" stroke="#fff" stroke-width="1.2"><path d="M0.5 6.5L6 1L11.5 6.5"/></svg>
<svg style="left:1141px;top:739px" width="13" height="18" viewBox="0 0 13 18" fill="none" stroke="#fff" stroke-width="1">
 <rect x="0.8" y="5" width="7.6" height="7.6" rx="1.6"/><path d="M8.6 8L11.8 5.8V11.8L8.6 9.6"/><path d="M2 2.6Q4.6 0.2 7.4 2.6M2 15.2Q4.6 17.6 7.4 15.2"/>
</svg>
<svg style="left:1163px;top:742px" width="17" height="13" viewBox="0 0 17 13" fill="none" stroke="#fff" stroke-width="1">
 <rect x="3.5" y="0.5" width="12.5" height="8.5"/><path d="M9.8 9V11.6M6.6 12H13"/><rect x="0.5" y="0.5" width="3.4" height="5" fill="#101010"/><path d="M1.4 2H3M1.4 3.6H3" stroke-width="0.7"/>
</svg>
<svg style="left:1187px;top:742px" width="17" height="13" viewBox="0 0 17 13" fill="none" stroke="#fff" stroke-width="1">
 <path d="M0.5 4.3H3L6.4 1V12L3 8.7H0.5Z"/><path d="M8.6 4.4Q10 6.5 8.6 8.6"/><path d="M10.8 2.6Q13.2 6.5 10.8 10.4" stroke="#aaa"/><path d="M13 0.8Q16.4 6.5 13 12.2" stroke="#666"/>
</svg>
<span class="t" style="left:1215.5px;top:741.50px;font-size:11px;letter-spacing:-1.505px;color:#fff;">ESP</span>
<span class="t" style="left:1262px;top:732.50px;font-size:11px;letter-spacing:-0.306px;color:#fff;">10:50</span>
<span class="t" style="left:1249px;top:751.00px;font-size:11px;letter-spacing:0.285px;color:#fff;">26/9/2022</span>
<svg style="left:1319px;top:740.5px" width="16" height="15" viewBox="0 0 16 15" fill="none" stroke="#fff" stroke-width="1"><path d="M0.5 0.5H15.5V11H10.6L8 14L5.4 11H0.5Z"/></svg>
<div class="a" style="left:1355px;top:728px;width:1px;height:40px;background:#4a4a4a;"></div>
</div>
</body></html>
